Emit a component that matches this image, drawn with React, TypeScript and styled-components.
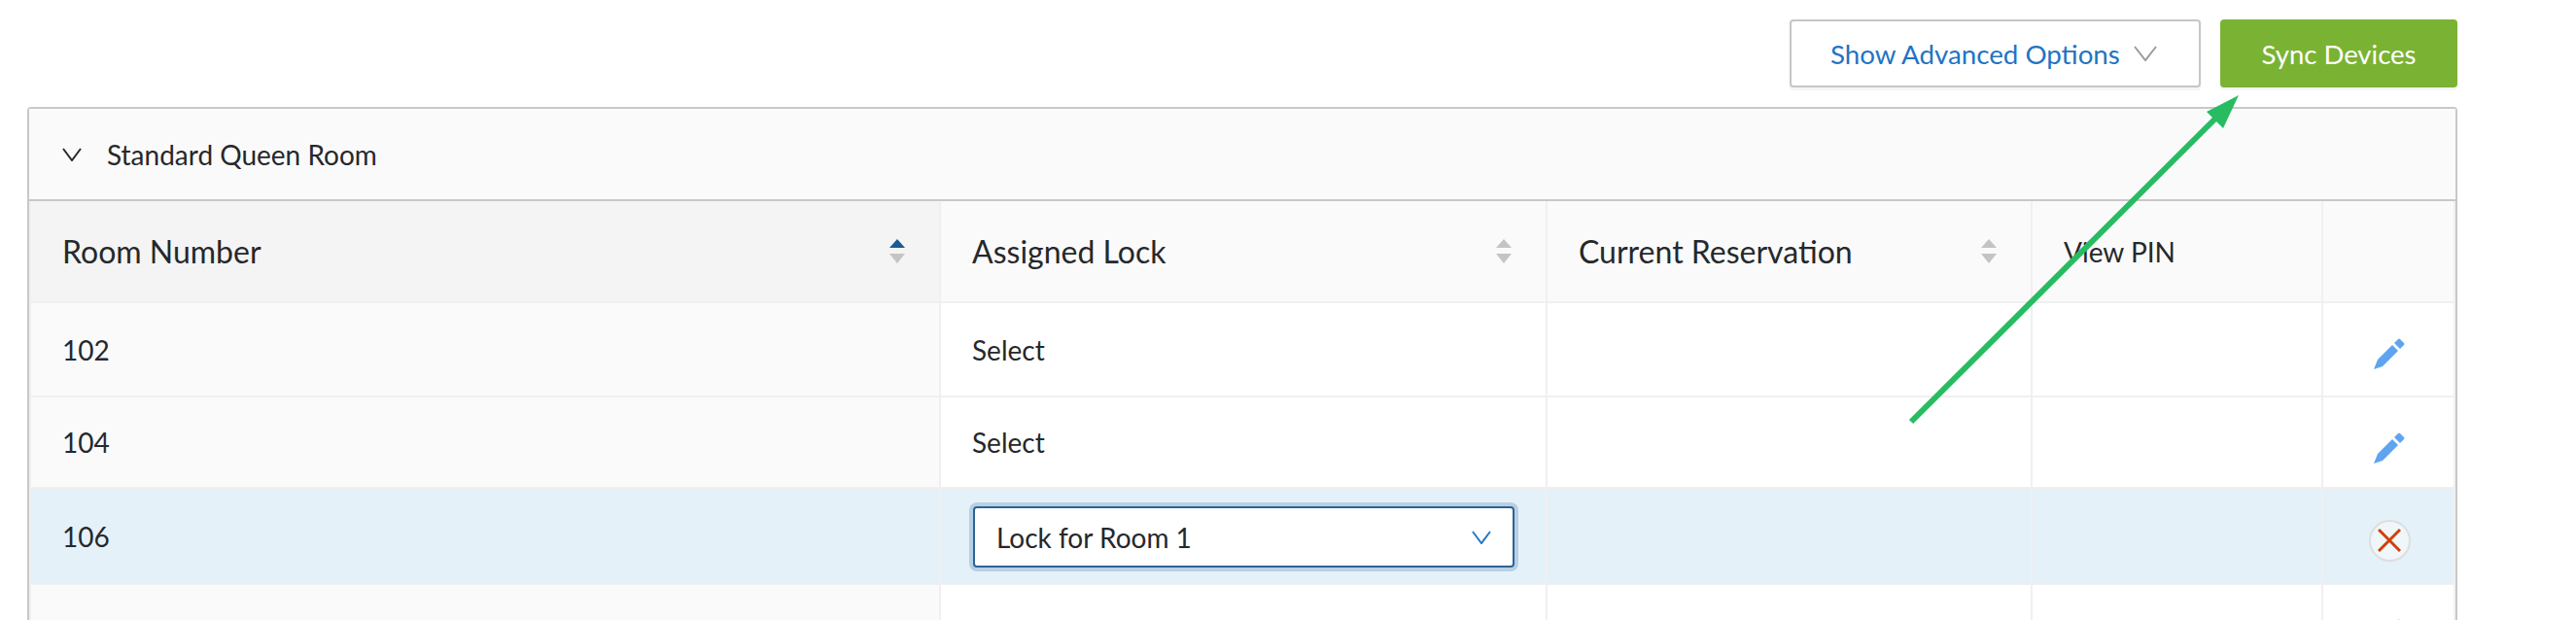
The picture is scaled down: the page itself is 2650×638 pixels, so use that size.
import React from "react";
import styled, { createGlobalStyle } from "styled-components";

const Global = createGlobalStyle`
  html, body { margin: 0; padding: 0; background: #fff; }
  body { font-family: Lato, "Open Sans", sans-serif; color: #26282b; overflow: hidden; }
`;

const Page = styled.div`
  position: relative;
  width: 2650px;
  height: 638px;
  overflow: hidden;
  box-sizing: border-box;
  padding: 20px 122px 0 28px;
`;

const Toolbar = styled.div`
  display: flex;
  justify-content: flex-end;
  gap: 20px;
  height: 70px;
  margin-bottom: 20px;
`;

const OptionsButton = styled.button`
  display: flex;
  align-items: center;
  box-sizing: border-box;
  width: 423px;
  height: 70px;
  padding: 0 0 0 40px;
  gap: 14px;
  background: #fff;
  border: 2px solid #c6c6c6;
  border-radius: 4px;
  box-shadow: 0 3px 0 #f5f5f5;
  color: #1f74c4;
  font: 400 27.7px Lato, sans-serif;
`;

const SyncButton = styled.button`
  width: 244px;
  height: 70px;
  border: 0;
  border-radius: 4px;
  background: #7ab333;
  box-shadow: 0 3px 0 #f5f5f5;
  color: #fff;
  font: 400 27.5px Lato, sans-serif;
`;

const Panel = styled.section`
  border: 2px solid #c8c8c8;
  border-bottom: 0;
  border-radius: 4px 4px 0 0;
  box-sizing: border-box;
  height: 528px;
`;

const GroupHeader = styled.div`
  display: flex;
  align-items: center;
  gap: 26px;
  height: 93px;
  padding-left: 34px;
  background: #fafafa;
  border-bottom: 2px solid #c8c8c8;
  font-size: 28px;
`;

const Table = styled.div`
  display: grid;
  grid-template-columns: 936px 624px 499px 299px 134px;
  border-left: 2px solid #f0f0f0;
  border-right: 2px solid #f0f0f0;
`;

const Cell = styled.div<{ $tint?: string; $rowHeight: number }>`
  display: flex;
  align-items: center;
  box-sizing: border-box;
  height: ${(p) => p.$rowHeight}px;
  padding: 0 32px;
  background: ${(p) => p.$tint ?? "#fff"};
  border-right: 2px solid #f0f0f0;
  border-bottom: 2px solid #f0f0f0;
  font-size: 28px;
  &:nth-child(5n) { border-right: 0; }
`;

const ActionCell = styled(Cell)<{ $iconDrop: number }>`
  justify-content: center;
  padding: ${(p) => p.$iconDrop}px 0 0 2px;
`;

const HeadLabel = styled.span<{ $small?: boolean }>`
  flex: 1;
  font-size: ${(p) => (p.$small ? 28 : 32)}px;
`;

const SortIcon = styled.svg`
  flex: none;
  width: 16px;
  height: 25px;
  margin-right: 3px;
`;

const LockSelect = styled.div`
  display: flex;
  align-items: center;
  justify-content: space-between;
  box-sizing: border-box;
  flex: 1;
  height: 63px;
  margin: 2px 0 0 1px;
  padding: 0 22px;
  background: #fff;
  border: 2px solid #2a6496;
  border-radius: 4px;
  box-shadow: 0 0 0 4px #b9cfe3;
  font-size: 28px;
`;

const DeleteButton = styled.span`
  flex: none;
  display: flex;
  align-items: center;
  justify-content: center;
  box-sizing: border-box;
  width: 43px;
  height: 43px;
  background: #f0f6f9;
  border: 2px solid #dcdfe0;
  border-radius: 50%;
`;

const ArrowOverlay = styled.svg`
  position: absolute;
  left: 0;
  top: 0;
  width: 2650px;
  height: 638px;
  pointer-events: none;
`;

const Chevron = ({ w, h, color, sw = 2 }: { w: number; h: number; color: string; sw?: number }) => (
  <svg width={w} height={h} viewBox={`0 0 ${w} ${h}`} fill="none">
    <path d={`M1 1 L${w / 2} ${h - 1} L${w - 1} 1`} stroke={color} strokeWidth={sw} />
  </svg>
);

const Sort = ({ active }: { active?: boolean }) => (
  <SortIcon viewBox="0 0 16 25">
    <path d="M8 0 L16 9 L0 9 Z" fill={active ? "#1b5a92" : "#c4c4c4"} />
    <path d="M0 15 L16 15 L8 25 Z" fill="#c4c4c4" />
  </SortIcon>
);

const Pencil = () => (
  <svg width="32" height="32" viewBox="0 0 32 32">
    <path d="M0 32 L4 22 L19 7 L25 13 L9 29 Z" fill="#5fa4f0" />
    <path d="M21 5 L25 1 Q26 0 27 1 L31 5 Q32 6 31 7 L27 11 Z" fill="#5fa4f0" />
  </svg>
);

const CloseMark = () => (
  <svg width="24" height="24" viewBox="0 0 24 24">
    <path d="M1 1 L23 23 M23 1 L1 23" stroke="#d0400a" strokeWidth="3" />
  </svg>
);

const rows = [
  { room: "102", lock: "Select", height: 97, iconDrop: 9 },
  { room: "104", lock: "Select", height: 94, iconDrop: 12 },
  { room: "106", lock: "", height: 99, iconDrop: 9, editing: true },
  { room: "", lock: "", height: 97, iconDrop: 7 },
];

export default function App() {
  return (
    <Page>
      <Global />
      <Toolbar>
        <OptionsButton>
          Show Advanced Options
          <Chevron w={24} h={16} color="#9a9a9a" />
        </OptionsButton>
        <SyncButton>Sync Devices</SyncButton>
      </Toolbar>
      <Panel>
        <GroupHeader>
          <Chevron w={20} h={14} color="#26282b" />
          Standard Queen Room
        </GroupHeader>
        <Table>
          <Cell $rowHeight={105} $tint="#f4f4f4">
            <HeadLabel>Room Number</HeadLabel>
            <Sort active />
          </Cell>
          <Cell $rowHeight={105} $tint="#fafafa">
            <HeadLabel>Assigned Lock</HeadLabel>
            <Sort />
          </Cell>
          <Cell $rowHeight={105} $tint="#fafafa">
            <HeadLabel>Current Reservation</HeadLabel>
            <Sort />
          </Cell>
          <Cell $rowHeight={105} $tint="#fafafa">
            <HeadLabel $small>View PIN</HeadLabel>
          </Cell>
          <Cell $rowHeight={105} $tint="#fafafa" />
          {rows.map((r, i) => {
            const tint = r.editing ? "#e5f1f9" : undefined;
            return (
              <React.Fragment key={i}>
                <Cell $rowHeight={r.height} $tint={tint ?? "#fafafa"}>{r.room}</Cell>
                <Cell $rowHeight={r.height} $tint={tint}>
                  {r.editing ? (
                    <LockSelect>
                      Lock for Room 1
                      <Chevron w={20} h={14} color="#1f78c8" />
                    </LockSelect>
                  ) : (
                    r.lock
                  )}
                </Cell>
                <Cell $rowHeight={r.height} $tint={tint} />
                <Cell $rowHeight={r.height} $tint={tint} />
                <ActionCell $rowHeight={r.height} $tint={tint} $iconDrop={r.iconDrop}>
                  {r.editing ? (
                    <DeleteButton>
                      <CloseMark />
                    </DeleteButton>
                  ) : (
                    <Pencil />
                  )}
                </ActionCell>
              </React.Fragment>
            );
          })}
        </Table>
      </Panel>
      <ArrowOverlay viewBox="0 0 2650 638">
        <path d="M1966 434 L2281 120" stroke="#28bc62" strokeWidth="6" />
        <path d="M2303 98 L2270 115 L2287 132 Z" fill="#28bc62" />
      </ArrowOverlay>
    </Page>
  );
}
